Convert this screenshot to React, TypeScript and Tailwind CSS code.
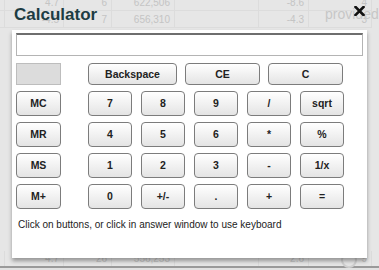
import React from "react";

const Btn = ({ label, w }: { label: string; w: string }) => (
  <button
    className={`${w} h-full rounded-[4px] border border-[#7c7c7c] bg-gradient-to-b from-[#ffffff] to-[#e4e4e4] text-[10.5px] font-bold text-[#222] leading-none`}
  >
    {label}
  </button>
);

const rows = [
  ["MC", "7", "8", "9", "/", "sqrt"],
  ["MR", "4", "5", "6", "*", "%"],
  ["MS", "1", "2", "3", "-", "1/x"],
  ["M+", "0", "+/-", ".", "+", "="],
];

const cols = ["w-[3px]", "w-[59px]", "w-[48px]", "w-[63px]", "w-[84px]", "w-[50px]", "w-[63px]", "w-[9px]"];

const BgRow = ({ cells, h }: { cells: string[]; h: string }) => (
  <div className={`flex ${h} border-b border-[#dcdcdc]`}>
    {cols.slice(0, 7).map((c, i) => (
      <div
        key={i}
        className={`${c} flex items-center justify-end pr-[4px] border-r border-[#dcdcdc] text-[10px] text-[#c4c4c4]`}
      >
        {cells[i] || ""}
      </div>
    ))}
    <div className="flex-1 bg-[#ececec]" />
  </div>
);

export default function App() {
  return (
    <div
      className="relative w-[379px] h-[270px] overflow-hidden bg-[#e6e6e6]"
      style={{ fontFamily: '"Liberation Sans", Arial, sans-serif' }}
    >
      {/* background page */}
      <div className="flex flex-col h-full">
        <div className="-mt-[6px] flex">
          <div className="flex flex-col">
            <BgRow cells={["", "4.7", "6", "622,506", "", "-8.6", "4"]} h="h-[17px]" />
            <BgRow cells={["", "-4.5", "7", "656,310", "", "-4.3", "3"]} h="h-[17px]" />
          </div>
        </div>
        <div className="flex-1" />
        <div className="flex h-[15px]">
          {cols.slice(0, 7).map((c, i) => (
            <div
              key={i}
              className={`${c} flex items-center justify-end pr-[4px] border-r border-[#dcdcdc] text-[10px] text-[#c4c4c4]`}
            >
              {["", "4.7", "26", "556,253", "", "2.6", "9"][i]}
            </div>
          ))}
        </div>
        <div className="h-[2px] bg-[#9a9a9a]" />
        <div className="h-[2px] bg-[#e2e2e2]" />
      </div>

      {/* faint overlay texts */}
      <div className="absolute left-[325px] top-[4px] text-[14px] text-[#c6c6c6]">provided</div>
      <div className="absolute left-[341px] top-[252px] w-[16px] h-[16px] rounded-full border-2 border-[#cfcfcf]" />

      {/* title */}
      <div className="absolute left-[14px] top-[2px] text-[17px] font-bold text-[#1d3c43]">Calculator</div>
      <svg className="absolute left-[354px] top-[6px]" width="11" height="10" viewBox="0 0 11 10">
        <path d="M1.5 1 L9.5 9 M9.5 1 L1.5 9" stroke="#111" strokeWidth="2.6" strokeLinecap="square" />
      </svg>

      {/* dialog */}
      <div className="absolute left-[12px] top-[30px] w-[355px] h-[228px] bg-white shadow-[0_3px_4px_rgba(0,0,0,0.35)]">
        <div className="flex flex-col pl-[4px] pt-[3px]">
          <input className="w-[347px] h-[23px] border border-[#b4b4b4] border-t-[#6e6e6e] border-t-2 outline-none" />
          <div className="flex h-[22px] mt-[7px]">
            <div className="w-[45px] h-full bg-[#dcdcdc] border border-[#bdbdbd]" />
            <div className="flex ml-[27px] gap-[8px] h-full">
              <Btn label="Backspace" w="w-[89px]" />
              <Btn label="CE" w="w-[75px]" />
              <Btn label="C" w="w-[75px]" />
            </div>
          </div>
          <div className="flex flex-col gap-[6px] mt-[6px]">
            {rows.map((r, i) => (
              <div key={i} className="flex h-[25px]">
                <Btn label={r[0]} w="w-[45px]" />
                <div className="flex ml-[27px] gap-[9px] h-full">
                  {r.slice(1).map((l) => (
                    <Btn key={l} label={l} w="w-[44px]" />
                  ))}
                </div>
              </div>
            ))}
          </div>
          <div className="mt-[8px] pl-[2px] text-[10px] text-[#222]">
            Click on buttons, or click in answer window to use keyboard
          </div>
        </div>
      </div>
    </div>
  );
}
